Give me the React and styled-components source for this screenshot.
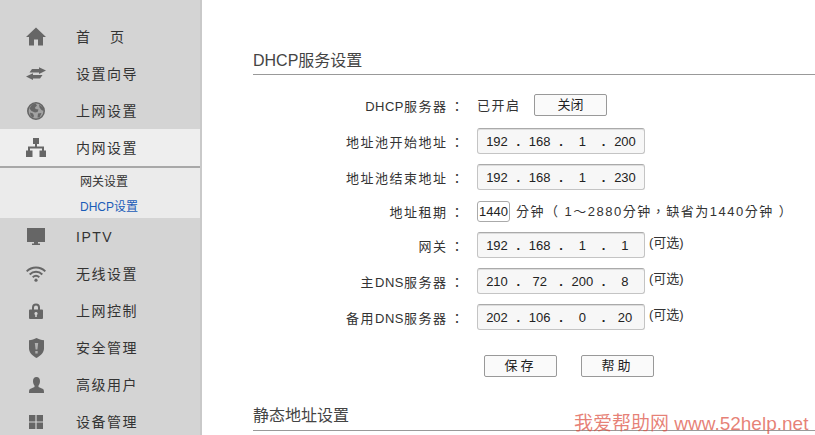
import React from 'react';
import styled, { createGlobalStyle } from 'styled-components';

const GlobalStyle = createGlobalStyle`
  html, body {
    margin: 0;
    height: 100%;
    overflow: hidden;
    background: #fff;
  }
  body {
    font-family: "Liberation Sans", "Noto Sans CJK SC", sans-serif;
  }
`;

const Page = styled.div`
  position: relative;
  display: flex;
  height: 435px;
  overflow: hidden;
`;

const Sidebar = styled.nav`
  flex: none;
  width: 200px;
  height: 435px;
  padding-top: 18px;
  background: #d4d4d4;
  border-right: 2px solid #c9c9c9;
  overflow: hidden;
`;

const MenuRow = styled.div`
  display: flex;
  align-items: center;
  gap: 30px;
  height: 37px;
  padding-left: 26px;
  background: ${(p) => (p.$active ? '#eeeeee' : 'transparent')};
  color: #333;
  font-size: 14px;
  line-height: 20px;
  letter-spacing: 1.5px;
  word-spacing: 13px;
`;

const IconSlot = styled.span`
  flex: none;
  display: flex;
  justify-content: center;
  width: 20px;
  color: #666;
`;

const SubMenu = styled.div`
  display: flex;
  flex-direction: column;
  height: 50px;
  padding-left: 80px;
  background: #ebebeb;
  border-top: 2px solid #a8a8a8;
`;

const SubItem = styled.div`
  display: flex;
  align-items: center;
  height: 25px;
  font-size: 12px;
  color: ${(p) => (p.$active ? '#1a5cb8' : '#333')};
`;

const Main = styled.main`
  flex: 1;
  min-width: 0;
  padding: 51px 0 0 51px;
`;

const Heading = styled.h2`
  margin: 0;
  padding-bottom: ${(p) => p.$gap || 3}px;
  font-size: 16px;
  font-weight: 400;
  line-height: 20px;
  color: #444;
  border-bottom: 1px solid #999;
`;

const Form = styled.div`
  display: flex;
  flex-direction: column;
  gap: 10px;
  margin: 19px 0 29px;
`;

const Row = styled.div`
  display: flex;
  align-items: center;
  margin: ${(p) => p.$margin || '0'};
`;

const Label = styled.span`
  flex: none;
  width: 224px;
  padding: 2px 12px 0 0;
  box-sizing: border-box;
  text-align: right;
  font-size: 13px;
  line-height: 18px;
  letter-spacing: 1.5px;
  color: #333;
`;

const Latin = styled.span`
  letter-spacing: 0.5px;
`;

const Colon = styled.span`
  margin-left: 3px;
  font-family: "Noto Sans CJK TC", sans-serif;
`;

const Status = styled.span`
  padding-top: 2px;
  font-size: 13px;
  line-height: 18px;
  letter-spacing: 1.5px;
  color: #333;
  margin-right: 13.5px;
`;

const Button = styled.button`
  width: 73px;
  height: 22px;
  padding: 0 0 1px;
  background: #fafafa;
  border: 1px solid #999;
  border-radius: 2px;
  font: 13px/18px "Liberation Sans", "Noto Sans CJK SC", sans-serif;
  letter-spacing: ${(p) => p.$spacing || 0}px;
  color: #222;
`;

const IpBox = styled.div`
  display: grid;
  grid-template-columns: 36px 1fr 36px 1fr 36px 1fr 36px;
  align-items: center;
  width: 168px;
  height: 26px;
  padding: 0 1px;
  box-sizing: border-box;
  background: #f7f7f7;
  border: 1px solid #c4c4c4;
  border-top-color: #aaa;
  border-radius: 3px;
  box-shadow: inset 0 1px 0 #ddd;
  font-size: 13px;
  color: #222;
`;

const Octet = styled.span`
  text-align: center;
`;

const Dot = styled.span`
  text-align: center;
  font-weight: 700;
`;

const LeaseBox = styled.div`
  width: 33px;
  height: 21px;
  box-sizing: border-box;
  border: 1px solid #aaa;
  border-radius: 3px;
  font-size: 13px;
  line-height: 19px;
  text-align: center;
  color: #222;
`;

const Note = styled.span`
  margin-left: ${(p) => p.$gap || 5}px;
  padding-top: ${(p) => (p.$top ? 2 : 0)}px;
  font-family: "Liberation Sans", "Noto Sans CJK TC", sans-serif;
  font-size: 13px;
  line-height: 18px;
  letter-spacing: ${(p) => p.$spacing || 0}px;
  color: #333;
  align-self: ${(p) => (p.$top ? 'flex-start' : 'center')};
`;

const Actions = styled.div`
  display: flex;
  gap: 24px;
  padding-left: 231px;
  margin-top: 15px;
`;

const Watermark = styled.div`
  position: absolute;
  left: 574px;
  top: 412px;
  font-size: 19px;
  line-height: 24px;
  white-space: nowrap;
  color: rgba(221, 80, 66, 0.72);
`;

const Svg = ({ children, w = 20, h = 20 }) => (
  <svg width={w} height={h} viewBox={`0 0 ${w} ${h}`} fill="currentColor">
    {children}
  </svg>
);

const HomeIcon = () => (
  <Svg h={19}>
    <path d="M10 .5 L20 10 H17 V18.5 H12 V12.5 H8 V18.5 H3 V10 H0 Z" />
  </Svg>
);

const ArrowsIcon = () => (
  <Svg h={13}>
    <path d="M20 3.4 L13 .2 V2 H6 L3.5 5.6 H13 V7 Z" />
    <path d="M0 9.4 L7 6.2 V8 H16.5 L14 11.4 H7 V13 Z" />
  </Svg>
);

const GlobeIcon = () => (
  <Svg w={18} h={18}>
    <circle cx="9" cy="9" r="8.2" fill="#a2a2a2" stroke="#666" strokeWidth="1.6" />
    <path d="M5 2.5 L8.5 1.5 L10 3.5 L8 5.5 L8.5 7 L11.5 7.5 L10.5 10 L8 10.5 L4.5 9 L2.5 6.5 Z M12 2.5 L15.8 5.5 L16.5 9 L14.5 8 L12.5 5.5 Z M3 10.5 L6 11.5 L7 14 L6 16 L3.5 13.5 Z M11 11.5 L14.5 11 L12.5 15.5 L10.5 15.5 Z" />
  </Svg>
);

const NetworkIcon = () => (
  <Svg h={19}>
    <path d="M7 0 H13 V6 H11 V8.5 H18 V12.5 H20 V19 H13.5 V12.5 H16 V10.5 H4 V12.5 H6.5 V19 H0 V12.5 H2 V8.5 H9 V6 H7 Z" />
  </Svg>
);

const MonitorIcon = () => (
  <Svg w={18} h={17}>
    <path d="M0 0 H18 V14 H11 V15.5 H13 V17 H5 V15.5 H7 V14 H0 Z" />
  </Svg>
);

const WifiIcon = () => (
  <svg width="20" height="16" viewBox="0 0 20 16" fill="none" stroke="currentColor" strokeWidth="2">
    <path d="M.7 5.4 C5.8 .3 14.2 .3 19.3 5.4" />
    <path d="M3.7 8.4 C7.3 5 12.7 5 16.3 8.4" />
    <path d="M6.7 11.2 C8.6 9.5 11.4 9.5 13.3 11.2" />
    <circle cx="10" cy="14.2" r="1.6" fill="currentColor" stroke="none" />
  </svg>
);

const LockIcon = () => (
  <Svg w={14} h={16}>
    <path
      fillRule="evenodd"
      d="M3 6.5 V4.5 a4 4 0 0 1 8 0 V6.5 H13 a1 1 0 0 1 1 1 V15 a1 1 0 0 1 -1 1 H1 a1 1 0 0 1 -1 -1 V7.5 a1 1 0 0 1 1 -1 Z M5 6.5 H9 V4.5 a2 2 0 0 0 -4 0 Z M7 9 a1.6 1.6 0 0 0 -.8 3 V14 H7.8 V12 A1.6 1.6 0 0 0 7 9 Z"
    />
  </Svg>
);

const ShieldIcon = () => (
  <Svg w={15} h={20}>
    <path d="M7.5 0 C9.5 1.3 12.5 2 15 2.2 V10.5 C15 15 11 18 7.5 20 C4 18 0 15 0 10.5 V2.2 C2.5 2 5.5 1.3 7.5 0 Z" />
    <path d="M5.8 5 H9.2 L8.4 11.5 H6.6 Z M6.3 13 H8.7 V15.4 H6.3 Z" fill="#b0b0b0" />
  </Svg>
);

const UserIcon = () => (
  <Svg w={15} h={16}>
    <path d="M7.5 0 C10 0 11 2 11 4.2 C11 6.5 10 8 9.5 8.6 V10 L14 12 C14.8 12.5 15 13.5 15 16 H0 C0 13.5 .2 12.5 1 12 L5.5 10 V8.6 C5 8 4 6.5 4 4.2 C4 2 5 0 7.5 0 Z" />
  </Svg>
);

const GridIcon = () => (
  <Svg w={14} h={14}>
    <path d="M0 0 H6.4 V6.4 H0 Z M7.6 0 H14 V6.4 H7.6 Z M0 7.6 H6.4 V14 H0 Z M7.6 7.6 H14 V14 H7.6 Z" />
  </Svg>
);

const IpField = ({ value }) => (
  <IpBox>
    {value.map((part, i) => (
      <React.Fragment key={i}>
        {i > 0 && <Dot>.</Dot>}
        <Octet>{part}</Octet>
      </React.Fragment>
    ))}
  </IpBox>
);

const MenuItem = ({ icon: Icon, label, active }) => (
  <MenuRow $active={active}>
    <IconSlot>
      <Icon />
    </IconSlot>
    <span>{label}</span>
  </MenuRow>
);

const FieldLabel = ({ children }) => (
  <Label>
    {children}
    <Colon>：</Colon>
  </Label>
);

const App = () => (
  <Page>
    <GlobalStyle />
    <Sidebar>
      <MenuItem icon={HomeIcon} label="首 页" />
      <MenuItem icon={ArrowsIcon} label="设置向导" />
      <MenuItem icon={GlobeIcon} label="上网设置" />
      <MenuItem icon={NetworkIcon} label="内网设置" active />
      <SubMenu>
        <SubItem>网关设置</SubItem>
        <SubItem $active>DHCP设置</SubItem>
      </SubMenu>
      <MenuItem icon={MonitorIcon} label="IPTV" />
      <MenuItem icon={WifiIcon} label="无线设置" />
      <MenuItem icon={LockIcon} label="上网控制" />
      <MenuItem icon={ShieldIcon} label="安全管理" />
      <MenuItem icon={UserIcon} label="高级用户" />
      <MenuItem icon={GridIcon} label="设备管理" />
    </Sidebar>
    <Main>
      <Heading>DHCP服务设置</Heading>
      <Form>
        <Row $margin="0 0 2px">
          <FieldLabel><Latin>DHCP</Latin>服务器</FieldLabel>
          <Status>已开启</Status>
          <Button>关闭</Button>
        </Row>
        <Row>
          <FieldLabel>地址池开始地址</FieldLabel>
          <IpField value={['192', '168', '1', '200']} />
        </Row>
        <Row>
          <FieldLabel>地址池结束地址</FieldLabel>
          <IpField value={['192', '168', '1', '230']} />
        </Row>
        <Row $margin="1px 0 0">
          <FieldLabel>地址租期</FieldLabel>
          <LeaseBox>1440</LeaseBox>
          <Note $gap={6} $spacing={1.5}>分钟（ 1～2880分钟，缺省为1440分钟 ）</Note>
        </Row>
        <Row>
          <FieldLabel>网关</FieldLabel>
          <IpField value={['192', '168', '1', '1']} />
          <Note $top $gap={4}>(可选)</Note>
        </Row>
        <Row>
          <FieldLabel>主<Latin>DNS</Latin>服务器</FieldLabel>
          <IpField value={['210', '72', '200', '8']} />
          <Note $top $gap={4}>(可选)</Note>
        </Row>
        <Row>
          <FieldLabel>备用<Latin>DNS</Latin>服务器</FieldLabel>
          <IpField value={['202', '106', '0', '20']} />
          <Note $top $gap={4}>(可选)</Note>
        </Row>
        <Actions>
          <Button $spacing={3}>保存</Button>
          <Button $spacing={3}>帮助</Button>
        </Actions>
      </Form>
      <Heading $gap={4}>静态地址设置</Heading>
    </Main>
    <Watermark>我爱帮助网 www.52help.net</Watermark>
  </Page>
);

export default App;
